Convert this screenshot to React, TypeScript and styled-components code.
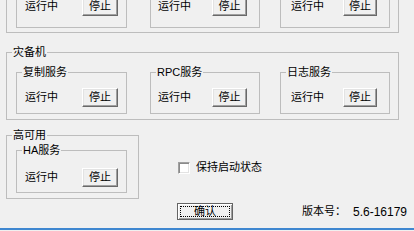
import React from "react";
import styled, { createGlobalStyle } from "styled-components";

const Global = createGlobalStyle`
  html, body { margin: 0; padding: 0; background: #f0f0f0; overflow: hidden; }
  body {
    font-family: "Liberation Sans", "Noto Sans CJK SC", sans-serif;
    font-size: 11px;
    color: #000;
  }
`;

const Window = styled.div`
  width: 414px;
  height: 231px;
  overflow: hidden;
`;

const Client = styled.div`
  box-sizing: border-box;
  height: 230px;
  overflow: hidden;
  border-bottom: 2px solid #3f87d0;
`;

const Content = styled.div`
  display: flex;
  flex-direction: column;
  align-items: flex-start;
  margin-top: -45px;
  padding-left: 6px;
`;

const Group = styled.fieldset<{ $w: number; $ml?: number; $mt?: number }>`
  box-sizing: border-box;
  width: ${(p) => p.$w}px;
  min-width: 0;
  margin: ${(p) => p.$mt ?? 0}px 0 0 ${(p) => p.$ml ?? 0}px;
  padding: 0;
  border: 1px solid #bdbdbd;
  flex: none;
`;

const Legend = styled.legend`
  margin-left: 5px;
  padding: 0 1px;
  height: 13px;
  font-size: 11px;
  line-height: 13px;
  white-space: nowrap;
`;

const GroupBody = styled.div<{ $pt: number; $pr: number; $pb: number; $pl: number }>`
  display: flex;
  align-items: flex-start;
  padding: ${(p) => `${p.$pt}px ${p.$pr}px ${p.$pb}px ${p.$pl}px`};
`;

const ServiceRow = styled.div<{ $pt: number; $pb: number; $pl: number; $gap: number }>`
  display: flex;
  align-items: center;
  gap: ${(p) => p.$gap}px;
  padding: ${(p) => `${p.$pt}px 0 ${p.$pb}px ${p.$pl}px`};
`;

const Status = styled.span`
  line-height: 13px;
  white-space: nowrap;
`;

const PushButton = styled.button<{ $w: number }>`
  box-sizing: border-box;
  width: ${(p) => p.$w}px;
  height: 19px;
  padding: 0;
  margin: 0;
  font: inherit;
  font-size: 11px;
  line-height: 13px;
  color: #000;
  background: #f0f0f0;
  border: 1px solid;
  border-color: #ffffff #696969 #696969 #ffffff;
  box-shadow: inset -1px -1px #a0a0a0, inset 1px 1px #e3e3e3;
  flex: none;
`;

const DefaultButton = styled(PushButton)`
  height: 17px;
  border-color: #646464;
  box-shadow: inset 1px 1px #ffffff, inset -1px -1px #a0a0a0;
  outline: 1px dotted #000;
  outline-offset: -4px;
`;

const HaRow = styled.div`
  display: flex;
  align-items: flex-start;
  margin-top: 9px;
`;

const CheckLabel = styled.label`
  display: flex;
  align-items: center;
  gap: 6px;
  margin: 32px 0 0 39px;
  line-height: 13px;
  white-space: nowrap;
`;

const CheckBox = styled.input`
  appearance: none;
  box-sizing: border-box;
  width: 12px;
  height: 12px;
  margin: 0;
  background: #ffffff;
  border: 1px solid;
  border-color: #a0a0a0 #ffffff #ffffff #a0a0a0;
  box-shadow: inset 1px 1px #8a8a8a, inset -1px -1px #e3e3e3;
`;

const Footer = styled.div`
  display: flex;
  align-items: center;
  margin-top: 4px;
`;

const VersionLabel = styled.span<{ $ml: number }>`
  margin-left: ${(p) => p.$ml}px;
  line-height: 13px;
  white-space: nowrap;
`;

const VersionValue = styled.span`
  margin-left: 7px;
  font-size: 12px;
  line-height: 14px;
  white-space: nowrap;
`;

type Svc = { name: string; w: number; ml: number; pl: number; gap: number; bw: number };

const services: Svc[] = [
  { name: "复制服务", w: 111, ml: 0, pl: 8, gap: 24, bw: 36 },
  { name: "RPC服务", w: 110, ml: 23, pl: 7, gap: 21, bw: 35 },
  { name: "日志服务", w: 110, ml: 20, pl: 10, gap: 19, bw: 34 },
];

function ServiceBox({ s, pt, pb }: { s: Svc; pt: number; pb: number }) {
  return (
    <Group $w={s.w} $ml={s.ml}>
      <Legend>{s.name}</Legend>
      <ServiceRow $pt={pt} $pb={pb} $pl={s.pl} $gap={s.gap}>
        <Status>运行中</Status>
        <PushButton $w={s.bw}>停止</PushButton>
      </ServiceRow>
    </Group>
  );
}

export default function App() {
  return (
    <>
      <Global />
      <Window>
        <Client>
          <Content>
            <Group $w={393}>
              <Legend>主机</Legend>
              <GroupBody $pt={7} $pr={7} $pb={4} $pl={9}>
                {services.map((s) => (
                  <ServiceBox key={s.name} s={s} pt={9} pb={11} />
                ))}
              </GroupBody>
            </Group>

            <Group $w={393} $mt={13}>
              <Legend>灾备机</Legend>
              <GroupBody $pt={7} $pr={7} $pb={5} $pl={9}>
                {services.map((s) => (
                  <ServiceBox key={s.name} s={s} pt={9} pb={6} />
                ))}
              </GroupBody>
            </Group>

            <HaRow>
              <Group $w={133}>
                <Legend>高可用</Legend>
                <GroupBody $pt={2} $pr={10} $pb={5} $pl={9}>
                  <ServiceBox
                    s={{ name: "HA服务", w: 111, ml: 0, pl: 8, gap: 24, bw: 36 }}
                    pt={11}
                    pb={5}
                  />
                </GroupBody>
              </Group>
              <CheckLabel>
                <CheckBox type="checkbox" />
                <span>保持启动状态</span>
              </CheckLabel>
            </HaRow>

            <Footer>
              <DefaultButton $w={56} style={{ marginLeft: 171 }}>确认</DefaultButton>
              <VersionLabel $ml={69}>版本号：</VersionLabel>
              <VersionValue>5.6-16179</VersionValue>
            </Footer>
          </Content>
        </Client>
      </Window>
    </>
  );
}
